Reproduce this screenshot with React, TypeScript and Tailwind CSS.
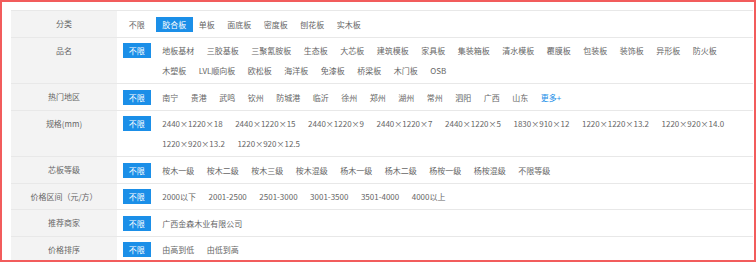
const rows: { label: string; items: string[]; active?: string; more?: boolean }[] = [
  { label: '分类', items: ['胶合板', '单板', '面底板', '密度板', '刨花板', '实木板'], active: '胶合板' },
  {
    label: '品名',
    items: [
      '地板基材', '三胶基板', '三聚氰胺板', '生态板', '大芯板', '建筑模板', '家具板', '集装箱板', '清水模板',
      '覆膜板', '包装板', '装饰板', '异形板', '防火板', '木塑板', 'LVL顺向板', '欧松板', '海洋板', '免漆板', '桥梁板',
      '木门板', 'OSB',
    ],
  },
  {
    label: '热门地区',
    items: ['南宁', '贵港', '武鸣', '钦州', '防城港', '临沂', '徐州', '郑州', '湖州', '常州', '泗阳', '广西', '山东'],
    more: true,
  },
  {
    label: '规格(mm)',
    items: [
      '2440×1220×18', '2440×1220×15', '2440×1220×9', '2440×1220×7', '2440×1220×5', '1830×910×12',
      '1220×1220×13.2', '1220×920×14.0', '1220×920×13.2', '1220×920×12.5',
    ],
  },
  {
    label: '芯板等级',
    items: ['桉木一级', '桉木二级', '桉木三级', '桉木混级', '杨木一级', '杨木二级', '杨桉一级', '杨桉混级', '不限等级'],
  },
  {
    label: '价格区间（元/方）',
    items: ['2000以下', '2001-2500', '2501-3000', '3001-3500', '3501-4000', '4000以上'],
  },
  { label: '推荐商家', items: ['广西金森木业有限公司'] },
  { label: '价格排序', items: ['由高到低', '由低到高'] },
];

function Item({ text, active }: { text: string; active?: boolean }) {
  return (
    <div className="flex h-[20px] items-center">
      <span className={`px-[6.25px] leading-[15px] whitespace-nowrap ${active ? 'bg-[#1b8fe8] text-white' : ''}`}>
        {text}
      </span>
    </div>
  );
}

export default function App() {
  return (
    <div className="w-[756px] h-[262px] overflow-hidden border-2 border-[#f25c5c] bg-white pl-[9px] pt-[8px] font-['Noto_Sans_CJK_SC',sans-serif] text-[8px] text-[#666]">
      <div className="w-[742px]">
        {rows.map((row) => (
          <div key={row.label} className="flex border-t border-[#e8e8e8]">
            <div className="w-[106px] shrink-0 bg-[#f3f3f3] pt-[3px] text-center leading-[20px]">{row.label}</div>
            <div className="flex flex-1 pt-[3px] pb-[2.5px] pl-[5.5px] pr-[4px]">
              <div className="mr-[5px] shrink-0">
                <Item text="不限" active={!row.active} />
              </div>
              <div className="flex flex-1 flex-wrap">
                {row.items.map((item) => (
                  <Item key={item} text={item} active={item === row.active} />
                ))}
                {row.more && (
                  <div className="flex h-[20px] items-center">
                    <span className="px-[6.25px] leading-[15px] text-[#1b8fe8]">更多+</span>
                  </div>
                )}
              </div>
            </div>
          </div>
        ))}
      </div>
    </div>
  );
}
